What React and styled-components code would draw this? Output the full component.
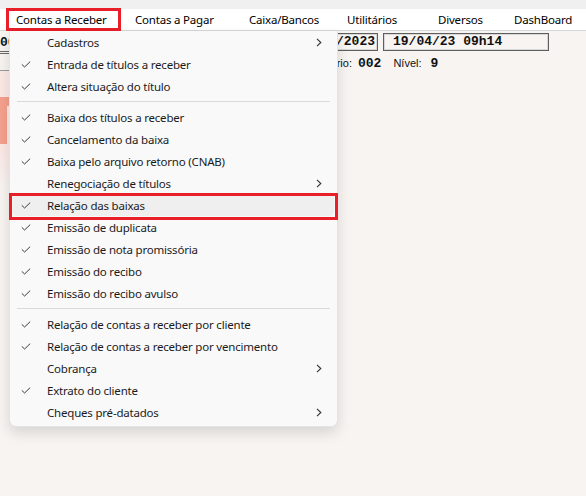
import React from 'react';
import styled, { createGlobalStyle } from 'styled-components';

const GlobalStyle = createGlobalStyle`
  html, body {
    margin: 0;
    padding: 0;
    background: #f7f4f2;
  }
  body {
    font-family: "Segoe UI", "Noto Sans", sans-serif;
    width: 586px;
    height: 496px;
    overflow: hidden;
  }
`;

const Window = styled.div`
  position: relative;
  width: 586px;
  height: 496px;
  background: #f7f4f2;
`;

const TopStrip = styled.div`
  height: 9px;
  background: #f0f0f0;
`;

const MenuBar = styled.div`
  display: flex;
  height: 21px;
  padding-left: 6px;
  background: #fff;
  border-bottom: 1px solid #d6d6d6;
  font-size: 11.5px;
  letter-spacing: -0.2px;
  color: #000;
`;

const BarItem = styled.div`
  position: relative;
  flex: 0 0 ${(p) => p.$w}px;
  display: flex;
  align-items: center;
  padding-left: ${(p) => p.$pad}px;
  box-sizing: border-box;
  white-space: nowrap;
  ${(p) =>
    p.$marked &&
    `
    &::after {
      content: '';
      position: absolute;
      top: -1px;
      bottom: -1px;
      left: 0;
      right: 0;
      border: 3px solid #e81f28;
    }
  `}
`;

const Workspace = styled.div`
  display: flex;
  padding-top: 2px;
`;

const LeftPanel = styled.div`
  width: 282px;
  display: flex;
  flex-direction: column;
`;

const CodeBox = styled.div`
  height: 17px;
  margin-top: 1px;
  font-family: "Liberation Mono", monospace;
  font-weight: bold;
  font-size: 13px;
  line-height: 17px;
  color: #111;
  border-bottom: 3px double #6a6a6a;
`;

const Rule = styled.div`
  height: 16px;
  border-bottom: 1px solid #9a9a9a;
`;

const LogoArea = styled.div`
  height: 115px;
  background: linear-gradient(#fbe9e6, #fbe9e6 70%, #f7f4f2);
  padding-top: 20px;
  box-sizing: border-box;
`;

const RightPanel = styled.div`
  display: flex;
  flex-direction: column;
  gap: 5px;
  padding-left: 6px;
`;

const BoxRow = styled.div`
  display: flex;
  gap: 5px;
`;

const DateBox = styled.div`
  width: ${(p) => p.$w}px;
  height: 18px;
  box-sizing: border-box;
  border: 1px solid #5e5e5e;
  box-shadow: inset 0 0 0 1px #d8d8d8;
  font-family: "Liberation Mono", monospace;
  font-weight: bold;
  font-size: 13px;
  line-height: 16px;
  color: #111;
  padding-left: ${(p) => p.$pad}px;
  white-space: nowrap;
`;

const InfoRow = styled.div`
  display: flex;
  align-items: baseline;
  font-family: "Liberation Sans", sans-serif;
  font-size: 11px;
  color: #111;
  padding-left: 23px;
`;

const InfoValue = styled.span`
  font-family: "Liberation Mono", monospace;
  font-weight: bold;
  font-size: 13px;
  margin: 0 ${(p) => p.$after}px 0 ${(p) => p.$before}px;
`;

const Dropdown = styled.div`
  position: absolute;
  left: 9px;
  top: 31px;
  width: 329px;
  box-sizing: border-box;
  padding-bottom: 3px;
  background: #f9f9f9;
  border: 1px solid #e4e4e4;
  border-top: none;
  border-radius: 0 0 7px 7px;
  box-shadow: 0 6px 14px rgba(0, 0, 0, 0.13);
  font-size: 11.5px;
  letter-spacing: -0.2px;
  color: #1b1b1b;
`;

const Item = styled.div`
  position: relative;
  display: flex;
  align-items: center;
  height: 22px;
  margin: 0 3px;
  padding: 0 12px 0 8px;
  border-radius: 4px;
  background: ${(p) => (p.$hover ? '#efefef' : 'transparent')};
  white-space: nowrap;
  ${(p) =>
    p.$marked &&
    `
    &::after {
      content: '';
      position: absolute;
      top: -1px;
      bottom: -4px;
      left: -4px;
      right: -4px;
      border: 3px solid #e81f28;
    }
  `}
`;

const CheckCell = styled.span`
  flex: 0 0 26px;
  display: flex;
  align-items: center;
  padding-top: 1px;
`;

const Label = styled.span`
  flex: 1;
`;

const Separator = styled.div`
  height: 9px;
  display: flex;
  align-items: center;
  padding: 0 7px;
  &::before {
    content: '';
    flex: 1;
    height: 1px;
    background: #dadada;
  }
`;

const Check = () => (
  <svg width="10" height="7" viewBox="0 0 10 7">
    <path d="M0.8 3.4 L3.6 6 L9.2 0.6" fill="none" stroke="#3a3a3a" strokeWidth="1" />
  </svg>
);

const Chevron = () => (
  <svg width="6" height="9" viewBox="0 0 6 9">
    <path d="M1 0.8 L4.8 4.5 L1 8.2" fill="none" stroke="#333" strokeWidth="1.1" />
  </svg>
);

const Logo = () => (
  <svg width="60" height="56" viewBox="0 0 60 56">
    <rect x="0" y="6" width="9" height="9" fill="#f5a08e" />
    <rect x="0" y="15" width="7" height="38" fill="#f5a08e" />
  </svg>
);

const barItems = [
  { label: 'Contas a Receber', w: 115, pad: 10, marked: true },
  { label: 'Contas a Pagar', w: 114, pad: 14 },
  { label: 'Caixa/Bancos', w: 98, pad: 14 },
  { label: 'Utilitários', w: 91, pad: 14 },
  { label: 'Diversos', w: 76, pad: 14 },
  { label: 'DashBoard', w: 80, pad: 14 },
];

const menuItems = [
  { label: 'Cadastros', sub: true },
  { label: 'Entrada de títulos a receber', check: true },
  { label: 'Altera situação do título', check: true },
  'sep',
  { label: 'Baixa dos títulos a receber', check: true },
  { label: 'Cancelamento da baixa', check: true },
  { label: 'Baixa pelo arquivo retorno (CNAB)', check: true },
  { label: 'Renegociação de títulos', sub: true },
  { label: 'Relação das baixas', check: true, hover: true, marked: true },
  { label: 'Emissão de duplicata', check: true },
  { label: 'Emissão de nota promissória', check: true },
  { label: 'Emissão do recibo', check: true },
  { label: 'Emissão do recibo avulso', check: true },
  'sep',
  { label: 'Relação de contas a receber por cliente', check: true },
  { label: 'Relação de contas a receber por vencimento', check: true },
  { label: 'Cobrança', sub: true },
  { label: 'Extrato do cliente', check: true },
  { label: 'Cheques pré-datados', sub: true },
];

export default function App() {
  return (
    <Window>
      <GlobalStyle />
      <TopStrip />
      <MenuBar>
        {barItems.map((b) => (
          <BarItem key={b.label} $w={b.w} $pad={b.pad} $marked={b.marked}>
            {b.label}
          </BarItem>
        ))}
      </MenuBar>

      <Workspace>
        <LeftPanel>
          <CodeBox>000</CodeBox>
          <Rule />
          <LogoArea>
            <Logo />
          </LogoArea>
        </LeftPanel>
        <RightPanel>
          <BoxRow>
            <DateBox $w={90} $pad={8}>19/04/2023</DateBox>
            <DateBox $w={166} $pad={9}>19/04/23 09h14</DateBox>
          </BoxRow>
          <InfoRow>
            Usuário:
            <InfoValue $before={6} $after={12}>002</InfoValue>
            Nível:
            <InfoValue $before={9} $after={0}>9</InfoValue>
          </InfoRow>
        </RightPanel>
      </Workspace>

      <Dropdown>
        {menuItems.map((m, i) =>
          m === 'sep' ? (
            <Separator key={i} />
          ) : (
            <Item key={m.label} $hover={m.hover} $marked={m.marked}>
              <CheckCell>{m.check && <Check />}</CheckCell>
              <Label>{m.label}</Label>
              {m.sub && <Chevron />}
            </Item>
          )
        )}
      </Dropdown>
    </Window>
  );
}
